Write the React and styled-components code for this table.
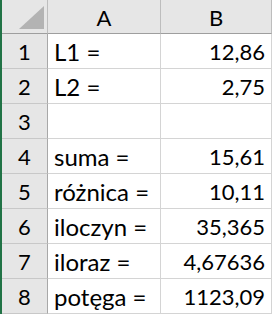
import React from 'react'
import styled, { createGlobalStyle } from 'styled-components'

const GlobalStyle = createGlobalStyle`
  html, body {
    margin: 0;
    padding: 0;
    background: #ffffff;
  }
`

const Sheet = styled.div`
  display: grid;
  grid-template-columns: 46px 113px 111px;
  grid-auto-rows: 35px;
  grid-template-rows: 34px;
  width: 272px;
  border-left: 2px solid #217346;
  font-family: Lato, 'Liberation Sans', sans-serif;
  font-size: 22px;
  color: #000;
`

const Corner = styled.div`
  position: relative;
  background: #e6e6e6;
  border-right: 1px solid #bdbdbd;
  border-bottom: 1px solid #9e9e9e;
`

const Triangle = styled.div`
  position: absolute;
  right: 3px;
  bottom: 4px;
  width: 0;
  height: 0;
  border-left: 25px solid transparent;
  border-bottom: 23px solid #b3b3b3;
`

const ColHead = styled.div`
  display: flex;
  align-items: center;
  justify-content: center;
  background: #e6e6e6;
  border-right: 1px solid #bdbdbd;
  border-bottom: 1px solid #9e9e9e;
  padding-top: 2px;
`

const RowHead = styled.div`
  display: flex;
  align-items: center;
  justify-content: center;
  background: #e6e6e6;
  border-right: 1px solid #a8a8a8;
  border-bottom: 1px solid #c8c8c8;
  padding-top: 1px;
`

const Cell = styled.div`
  display: flex;
  align-items: center;
  justify-content: ${({ $num }) => ($num ? 'flex-end' : 'flex-start')};
  padding: 1px 6px 0 6px;
  font-size: ${({ $num }) => ($num ? '22px' : '24px')};
  border-right: 1px solid #d4d4d4;
  border-bottom: 1px solid #d4d4d4;
  white-space: nowrap;
`

const rows = [
  ['L1 =', '12,86'],
  ['L2 =', '2,75'],
  ['', ''],
  ['suma =', '15,61'],
  ['różnica =', '10,11'],
  ['iloczyn =', '35,365'],
  ['iloraz =', '4,67636'],
  ['potęga =', '1123,09'],
]

export default function App() {
  return (
    <>
      <GlobalStyle />
      <Sheet>
        <Corner>
          <Triangle />
        </Corner>
        <ColHead>A</ColHead>
        <ColHead>B</ColHead>
        {rows.map(([label, value], i) => (
          <React.Fragment key={i}>
            <RowHead>{i + 1}</RowHead>
            <Cell>{label}</Cell>
            <Cell $num>{value}</Cell>
          </React.Fragment>
        ))}
      </Sheet>
    </>
  )
}
